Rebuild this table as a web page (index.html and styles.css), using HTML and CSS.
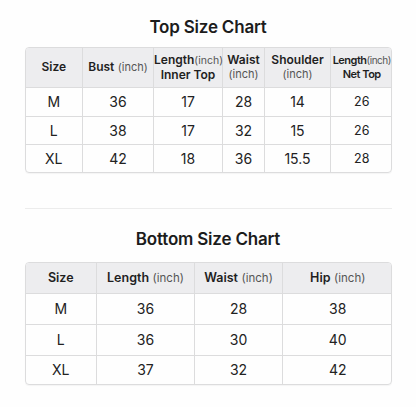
FILE: index.html
```html
<!DOCTYPE html>
<html>
<head>
<meta charset="utf-8">
<link rel="stylesheet" href="styles.css">
</head>
<body>
<main class="page">
  <h2 class="title title-top">Top Size Chart</h2>
  <div class="card">
    <table class="chart chart-top">
      <colgroup>
        <col style="width:57px"><col style="width:71px"><col style="width:69px"><col style="width:42px"><col style="width:66px"><col style="width:62px">
      </colgroup>
      <thead>
        <tr>
          <th><b>Size</b></th>
          <th><b>Bust</b> <span class="unit">(inch)</span></th>
          <th><b>Length</b><span class="unit sm">(inch)</span><br><b>Inner Top</b></th>
          <th><b>Waist</b><br><span class="unit">(inch)</span></th>
          <th><b>Shoulder</b><br><span class="unit">(inch)</span></th>
          <th class="narrow"><b>Length</b><span class="unit">(inch)</span><br><b>Net Top</b></th>
        </tr>
      </thead>
      <tbody>
        <tr class="r1"><td>M</td><td>36</td><td>17</td><td>28</td><td>14</td><td class="alt">26</td></tr>
        <tr class="r2"><td>L</td><td>38</td><td>17</td><td>32</td><td>15</td><td class="alt">26</td></tr>
        <tr class="r3"><td>XL</td><td>42</td><td>18</td><td>36</td><td>15.5</td><td class="alt">28</td></tr>
      </tbody>
    </table>
  </div>
  <hr class="sep">
  <h2 class="title title-bottom">Bottom Size Chart</h2>
  <div class="card">
    <table class="chart chart-bottom">
      <colgroup>
        <col style="width:71px"><col style="width:98px"><col style="width:88px"><col style="width:110px">
      </colgroup>
      <thead>
        <tr>
          <th><b>Size</b></th>
          <th><b>Length</b> <span class="unit">(inch)</span></th>
          <th><b>Waist</b> <span class="unit">(inch)</span></th>
          <th><b>Hip</b> <span class="unit">(inch)</span></th>
        </tr>
      </thead>
      <tbody>
        <tr class="b1"><td>M</td><td>36</td><td>28</td><td>38</td></tr>
        <tr class="b2"><td>L</td><td>36</td><td>30</td><td>40</td></tr>
        <tr class="b3"><td>XL</td><td>37</td><td>32</td><td>42</td></tr>
      </tbody>
    </table>
  </div>
</main>
</body>
</html>
```
FILE: styles.css
```css
* { box-sizing: border-box; }
html, body { margin: 0; padding: 0; background: #fefefe; }
body {
  font-family: Inter, "Noto Sans", "Liberation Sans", sans-serif;
  color: #1f1f1f;
  width: 416px;
  height: 407px;
  overflow: hidden;
}
.page {
  display: flex;
  flex-direction: column;
  align-items: center;
  padding-top: 17px;
}
.title {
  margin: 0;
  font-size: 17px;
  line-height: 20px;
  font-weight: 600;
  color: #1c1c1c;
  letter-spacing: -0.2px;
}
.title-top { margin-bottom: 10px; }
.title-bottom { margin-bottom: 13px; }
.card {
  width: 367px;
  border: 1px solid #dcdcdd;
  border-radius: 4px;
  overflow: hidden;
  box-shadow: 0 1px 1px rgba(0,0,0,0.04);
}
.chart {
  width: 100%;
  border-collapse: collapse;
  table-layout: fixed;
}
.chart th, .chart td {
  border-right: 1px solid #dcdcdd;
  border-bottom: 1px solid #dcdcdd;
  text-align: center;
  padding: 0;
}
.chart th:last-child, .chart td:last-child { border-right: none; }
.chart tbody tr:last-child td { border-bottom: none; }
.chart thead th {
  background: #ededef;
  font-size: 12px;
  line-height: 14px;
  font-weight: 400;
  color: #1f1f1f;
  white-space: nowrap;
}
.chart th b { font-weight: 600; }
.unit { color: #555; font-size: 11px; }
.unit.sm { font-size: 10.5px; }
.narrow { letter-spacing: -0.5px; }
.narrow b { font-size: 11px; }
.narrow .unit { font-size: 10px; }
.chart-top thead th { height: 39px; }
.chart-top .r1 td { height: 29px; }
.chart-top .r2 td { height: 28px; }
.chart-top .r3 td { height: 28px; }
.chart td {
  font-size: 14px;
  color: #222;
}
.chart td.alt { font-size: 12.5px; }
.chart-bottom thead th { font-size: 12.5px; }
.chart-bottom .unit { font-size: 11.5px; }
.sep {
  width: 367px;
  border: none;
  border-top: 1px solid #ececec;
  margin: 35px 0 20px;
}
.chart-bottom thead th { height: 30px; }
.chart-bottom tbody td { height: 31px; }
.chart-bottom .b3 td { height: 29px; }
```
